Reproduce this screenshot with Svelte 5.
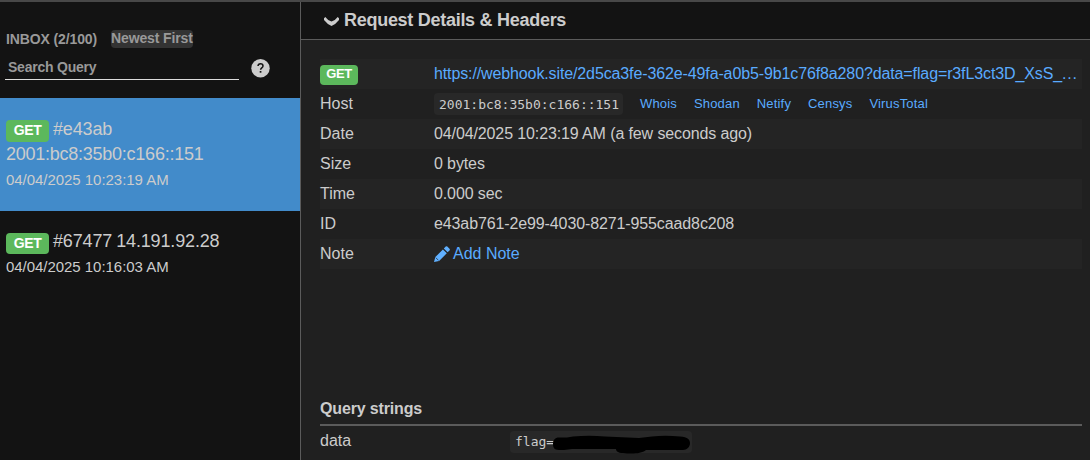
<script>
  const requests = [
    { id: '#e43ab', ip: '2001:bc8:35b0:c166::151', date: '04/04/2025 10:23:19 AM', active: true },
    { id: '#67477', ip: '14.191.92.28', date: '04/04/2025 10:16:03 AM', active: false }
  ];
  const lookups = ['Whois', 'Shodan', 'Netify', 'Censys', 'VirusTotal'];
  const facts = [
    ['Date', '04/04/2025 10:23:19 AM (a few seconds ago)'],
    ['Size', '0 bytes'],
    ['Time', '0.000 sec'],
    ['ID', 'e43ab761-2e99-4030-8271-955caad8c208']
  ];
</script>

<div class="page">
  <aside>
    <div class="inbox"><span class="count">INBOX (2/100)</span><span class="sort">Newest First</span></div>
    <div class="search">
      <div class="field">Search Query</div>
      <svg class="help" width="19" height="19" viewBox="0 0 19 19">
        <circle cx="9.5" cy="9.2" r="9.2" fill="#ccc" />
        <path d="M7 7C7.100 5.400 8.100 4.700 9.500 4.700c1.500 0 2.500.8 2.500 2.200 0 2-2.400 2-2.400 3.900" fill="none" stroke="#131313" stroke-width="1.500" />
        <rect x="8.700" y="12" width="1.700" height="1.700" fill="#131313" />
      </svg>
    </div>
    {#each requests as r}
      <div class="item" class:active={r.active}>
        <div class="name"><span class="badge">GET</span><span class="id">{r.id}</span> {r.ip}</div>
        <div class="when">{r.date}</div>
      </div>
    {/each}
  </aside>
  <main>
    <header>
      <svg width="15" height="9" viewBox="0 0 15 9"><path d="M0 1.200L1.300 0Q4 3.700 7.500 4.600Q11 3.700 13.700 0L15 1.200V3Q11.500 7.500 7.500 8.900Q3.500 7.500 0 3Z" fill="#ccc" /></svg>
      <h2>Request Details &amp; Headers</h2>
    </header>
    <section class="details">
      <div class="row">
        <div><span class="badge small">GET</span></div>
        <a class="url">https://webhook.site/2d5ca3fe-362e-49fa-a0b5-9b1c76f8a280?data=flag=r3fL3ct3D_XsS_<span>...</span></a>
      </div>
      <div class="row">
        <div>Host</div>
        <div class="host"><code>2001:bc8:35b0:c166::151</code>{#each lookups as l}<a>{l}</a>{/each}</div>
      </div>
      {#each facts as [k, v]}
        <div class="row"><div>{k}</div><div class="value">{v}</div></div>
      {/each}
      <div class="row">
        <div>Note</div>
        <a class="note"><svg width="16" height="17" viewBox="0 0 16 17">
          <path d="M0 16l1.300-4.900 7.600-7.700 3.900 3.900-7.700 7.600zM9.800 2.500l1.900-1.900q.8-.7 1.600 0l2.200 2.200q.8.8 0 1.600l-1.900 1.900z" fill="#60b0ff" />
          <path d="M1.800 11.700l2.700 2.700" fill="none" stroke="#242424" stroke-width=".7" />
        </svg>Add Note</a>
      </div>
    </section>
    <section class="query">
      <h3>Query strings</h3>
      <div class="pair">
        <div>data</div>
        <code class="flag">flag=<svg width="137" height="20" viewBox="0 0 137 20"><path d="M6 2.500H14L20 1.500Q36 0 52 1.500L86 3L99 1.500Q112 0 127 1.500C135 2 137 5 137 8C137 12 134 15 130 15H93C88 19 78 19 70 18C65 18 63 16 63 14L19 14L11 15H6C1 15 0 12 0 9C0 5 2 2.500 6 2.500Z" fill="#000" /></svg></code>
      </div>
    </section>
  </main>
</div>

<style>
  :global(body) { margin: 0; background: #202020; }
  .page { display: flex; box-sizing: border-box; width: 1090px; height: 460px; overflow: hidden; border-top: 2px solid #484848; background: #202020; color: #ccc; font: 16px/30px "Liberation Sans", Arial, sans-serif; }
  aside { flex: 0 0 300px; background: #131313; border-right: 1px solid #5b5b5b; }
  .inbox { display: flex; align-items: center; height: 52px; box-sizing: border-box; padding: 21px 6px 0; font-size: 14px; font-weight: bold; line-height: 18px; color: #999; }
  .count { width: 105px; padding-top: 1px; letter-spacing: -.12px; }
  .sort { background: #333; border-radius: 4px; line-height: 16px; height: 18px; white-space: nowrap; letter-spacing: -.13px; }
  .search { display: flex; height: 44px; padding-left: 5px; }
  .field { box-sizing: border-box; width: 234px; height: 26px; padding-left: 3px; border-bottom: 1px solid #ddd; font-size: 14px; font-weight: bold; line-height: 26px; letter-spacing: -.22px; color: #999; }
  .help { margin: 5px 0 0 12px; }
  .item { box-sizing: border-box; height: 87px; padding: 18px 6px 0; }
  .item.active { height: 113px; padding-top: 19px; background: #428bca; }
  .name { display: flex; flex-wrap: wrap; column-gap: 4px; width: 230px; font-size: 18px; line-height: 25px; letter-spacing: -.25px; }
  .id { letter-spacing: -.15px; }
  .item:not(.active) .name { letter-spacing: -.15px; }
  .when { font-size: 15px; line-height: 26px; letter-spacing: -.04px; }
  .badge { box-sizing: border-box; width: 43px; height: 21px; margin-top: 4px; margin-bottom: -1px; border-radius: 4px; background: #5cb85c; color: #fff; font-size: 14px; font-weight: bold; line-height: 20px; letter-spacing: -.4px; text-align: center; }
  .badge.small { margin: 1px 0 0; width: 38px; height: 20px; font-size: 13px; line-height: 18px; display: block; }
  .item.active .badge { margin-top: 3px; height: 22px; }
  main { flex: 1; min-width: 0; }
  header { display: flex; align-items: center; box-sizing: border-box; height: 38px; padding: 0 0 2px 23px; border-bottom: 1px solid #5b5b5b; background: #131313; }
  header svg { margin-top: 3px; }
  h2 { margin: 0 0 0 5px; font-size: 18px; line-height: 30px; letter-spacing: -.28px; }
  .details { margin: 19px 8px 0 19px; }
  .row { display: grid; grid-template-columns: 114px 1fr; grid-template-rows: 30px; height: 30px; align-items: center; white-space: nowrap; }
  .row:nth-child(odd) { background: #242424; }
  .value { letter-spacing: -.115px; }
  a { color: #5aabff; }
  .url { letter-spacing: -.12px; }
  .url span { letter-spacing: .8px; }
  .host { display: flex; align-items: center; height: 30px; font-size: 13px; }
  .host a { margin-right: 17px; line-height: 32px; letter-spacing: .17px; }
  code { box-sizing: border-box; height: 22px; padding: 0 5px; border-radius: 4px; background: #282828; font: 13px/24px "DejaVu Sans Mono", monospace; }
  .host code { width: 189px; margin: 0 17px 0 0; }
  .note { display: flex; align-items: center; }
  .note svg { margin-right: 3px; }
  .query { margin: 124px 8px 0 19px; }
  h3 { margin: 0; border-bottom: 2px solid #5b5b5b; font-size: 16px; line-height: 31px; letter-spacing: -.15px; }
  .pair { display: grid; grid-template-columns: 190px 1fr; align-items: center; }
  .flag { display: flex; width: 182px; margin-top: 1px; padding-right: 0; line-height: 22px; }
  .flag svg { flex: none; margin: 4px 0 0 -1px; }
</style>
